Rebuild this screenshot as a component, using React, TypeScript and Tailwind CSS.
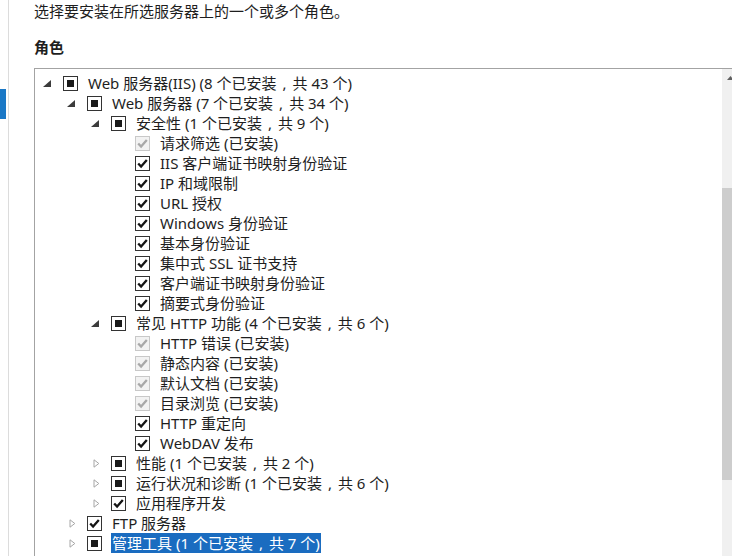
import React from "react";

type State = "ind" | "chk" | "dis";
type Exp = "open" | "closed" | null;

interface Row {
  level: number;
  exp: Exp;
  state: State;
  text: string;
  selected?: boolean;
}

const rows: Row[] = [
  { level: 0, exp: "open", state: "ind", text: "Web 服务器(IIS) (8 个已安装，共 43 个)" },
  { level: 1, exp: "open", state: "ind", text: "Web 服务器 (7 个已安装，共 34 个)" },
  { level: 2, exp: "open", state: "ind", text: "安全性 (1 个已安装，共 9 个)" },
  { level: 3, exp: null, state: "dis", text: "请求筛选 (已安装)" },
  { level: 3, exp: null, state: "chk", text: "IIS 客户端证书映射身份验证" },
  { level: 3, exp: null, state: "chk", text: "IP 和域限制" },
  { level: 3, exp: null, state: "chk", text: "URL 授权" },
  { level: 3, exp: null, state: "chk", text: "Windows 身份验证" },
  { level: 3, exp: null, state: "chk", text: "基本身份验证" },
  { level: 3, exp: null, state: "chk", text: "集中式 SSL 证书支持" },
  { level: 3, exp: null, state: "chk", text: "客户端证书映射身份验证" },
  { level: 3, exp: null, state: "chk", text: "摘要式身份验证" },
  { level: 2, exp: "open", state: "ind", text: "常见 HTTP 功能 (4 个已安装，共 6 个)" },
  { level: 3, exp: null, state: "dis", text: "HTTP 错误 (已安装)" },
  { level: 3, exp: null, state: "dis", text: "静态内容 (已安装)" },
  { level: 3, exp: null, state: "dis", text: "默认文档 (已安装)" },
  { level: 3, exp: null, state: "dis", text: "目录浏览 (已安装)" },
  { level: 3, exp: null, state: "chk", text: "HTTP 重定向" },
  { level: 3, exp: null, state: "chk", text: "WebDAV 发布" },
  { level: 2, exp: "closed", state: "ind", text: "性能 (1 个已安装，共 2 个)" },
  { level: 2, exp: "closed", state: "ind", text: "运行状况和诊断 (1 个已安装，共 6 个)" },
  { level: 2, exp: "closed", state: "chk", text: "应用程序开发" },
  { level: 1, exp: "closed", state: "chk", text: "FTP 服务器" },
  { level: 1, exp: "closed", state: "ind", text: "管理工具 (1 个已安装，共 7 个)", selected: true },
];

const indent = ["pl-[8px]", "pl-[32px]", "pl-[56px]", "pl-[80px]"];

// the full-width comma sits centred in its cell, as in the original UI font
function Label({ text }: { text: string }) {
  const parts = text.split("，");
  return (
    <>
      {parts.map((p, i) => (
        <React.Fragment key={i}>
          {i > 0 && <span className="inline-block w-[16px] text-center">,</span>}
          {p}
        </React.Fragment>
      ))}
    </>
  );
}

function Expander({ exp }: { exp: Exp }) {
  if (exp === "open") {
    return (
      <svg width="8" height="7" viewBox="0 0 8 7">
        <polygon points="8,0 8,7 0,7" fill="#3c3c3c" />
      </svg>
    );
  }
  if (exp === "closed") {
    return (
      <svg width="7" height="9" viewBox="0 0 7 9" className="ml-[2px]">
        <polygon points="1,0.8 5.8,4.5 1,8.2" fill="#fff" stroke="#a6a6a6" strokeWidth="1" />
      </svg>
    );
  }
  return null;
}

function Check({ state }: { state: State }) {
  const disabled = state === "dis";
  return (
    <div
      className={
        "w-[15px] h-[15px] border flex items-center justify-center shrink-0 " +
        (disabled ? "border-[#c8c8c8] bg-[#f2f2f2]" : "border-[#333333] bg-white")
      }
    >
      {state === "ind" ? (
        <div className="w-[7px] h-[7px] bg-[#1a1a1a]" />
      ) : (
        <svg width="13" height="13" viewBox="0 0 13 13">
          <path
            d="M2.2 6.4 L5.1 9.6 L10.8 3.1"
            fill="none"
            stroke={disabled ? "#a8a8a8" : "#141414"}
            strokeWidth="2.3"
          />
        </svg>
      )}
    </div>
  );
}

export default function App() {
  return (
    <div
      className="w-[732px] h-[556px] overflow-hidden bg-white flex text-[#1e1e1e] text-[15px]"
      style={{ fontFamily: '"Noto Sans", "Noto Sans CJK SC", sans-serif' }}
    >
      <div className="w-[9px] shrink-0 border-r border-[#dcdcdc] flex flex-col">
        <div className="h-[89px]" />
        <div className="w-[6px] h-[30px] bg-[#1a78c6]" />
      </div>
      <div className="flex-1 flex flex-col pl-[25px]">
        <div className="h-[20px] mt-[1px] leading-[20px] whitespace-nowrap">
          选择要安装在所选服务器上的一个或多个角色。
        </div>
        <div className="h-[20px] mt-[16px] leading-[20px] font-bold">角色</div>
        <div className="mt-[11px] w-[706px] h-[520px] border border-[#a3a3a3] flex shrink-0">
          <div className="flex-1 pt-[4px] flex flex-col">
            {rows.map((r, i) => (
              <div key={i} className={"h-[20px] shrink-0 flex items-center whitespace-nowrap " + indent[r.level]}>
                <div className="w-[9px] h-[20px] flex items-center">
                  <Expander exp={r.exp} />
                </div>
                <div className="ml-[11px]">
                  <Check state={r.state} />
                </div>
                <span
                  className={
                    "ml-[9px] h-[20px] leading-[20px] px-[1px] " +
                    (r.selected ? "bg-[#1a6cc0] text-white" : "")
                  }
                >
                  <Label text={r.text} />
                </span>
              </div>
            ))}
          </div>
          <div className="w-[17px] h-full bg-[#f0f0f0] flex flex-col shrink-0">
            <div className="h-[17px] shrink-0 flex items-center justify-center">
              <svg width="7" height="4" viewBox="0 0 7 4">
                <polygon points="3.5,0 7,4 0,4" fill="#606060" />
              </svg>
            </div>
            <div className="h-[102px] shrink-0" />
            <div className="w-[17px] h-[292px] shrink-0 bg-[#cdcdcd]" />
          </div>
        </div>
      </div>
    </div>
  );
}
